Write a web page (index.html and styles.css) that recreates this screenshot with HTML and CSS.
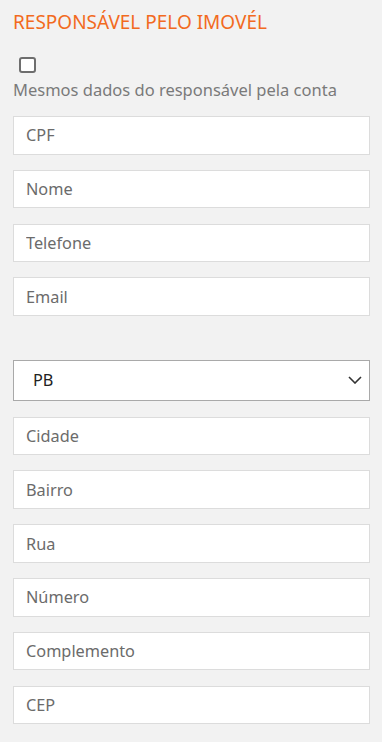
FILE: index.html
```html
<!DOCTYPE html>
<html lang="pt-BR">
<head>
  <meta charset="UTF-8" />
  <meta name="viewport" content="width=device-width, initial-scale=1.0" />
  <title>Responsável pelo imóvel</title>
  <link rel="stylesheet" href="styles.css">
</head>
<body>
  <div class="form">
    <h2 class="title">RESPONSÁVEL PELO IMOVÉL</h2>
    <div class="check">
      <input type="checkbox" id="same" />
      <label for="same">Mesmos dados do responsável pela conta</label>
    </div>

    <input class="field" type="text" placeholder="CPF" />
    <input class="field" type="text" placeholder="Nome" />
    <input class="field" type="tel" placeholder="Telefone" />
    <input class="field" type="email" placeholder="Email" />

    <div class="select-wrap">
      <select class="select">
        <option>PB</option>
      </select>
      <svg class="chevron" width="14" height="8" viewBox="0 0 14 8"><path d="M1 1 L7 7 L13 1" fill="none" stroke="#333" stroke-width="1.6"/></svg>
    </div>

    <input class="field" type="text" placeholder="Cidade" />
    <input class="field" type="text" placeholder="Bairro" />
    <input class="field" type="text" placeholder="Rua" />
    <input class="field" type="text" placeholder="Número" />
    <input class="field" type="text" placeholder="Complemento" />
    <input class="field" type="text" placeholder="CEP" />
  </div>
</body>
</html>
```

FILE: styles.css
```css
body { margin: 0; background: #f2f2f2; font-family: "Noto Sans", "Open Sans", sans-serif; }
.form { padding: 8px 12px 0 13px; display: flex; flex-direction: column; }
.title { margin: 0; font-size: 19px; font-weight: normal; color: #f26a21; line-height: 28px; }
.check { margin-top: 21px; margin-bottom: 16px; }
.check input { appearance: none; -webkit-appearance: none; display: block; width: 17px; height: 16px; margin: 0 0 6px 6px; border: 2px solid #6e6e6e; border-radius: 3px; background: #fff; box-sizing: border-box; }
.check label { display: block; font-size: 16.5px; color: #7a7a7a; line-height: 21px; }
.field { box-sizing: border-box; height: 38.5px; margin: 0 0 15.3px; padding: 0 12px; border: 1px solid #dcdcdc; background: #fff; font-family: inherit; font-size: 16.3px; color: #333; outline: none; }
.field::placeholder { color: #6b6b6b; }
.select-wrap { position: relative; margin: 28.5px 0 16px; }
.select { appearance: none; -webkit-appearance: none; box-sizing: border-box; width: 100%; height: 41px; padding: 0 19px; border: 1px solid #a9a9a9; border-radius: 0; background: #fff; font-family: inherit; font-size: 16.3px; color: #222; outline: none; }
.chevron { position: absolute; right: 8px; top: 16px; pointer-events: none; }
```
